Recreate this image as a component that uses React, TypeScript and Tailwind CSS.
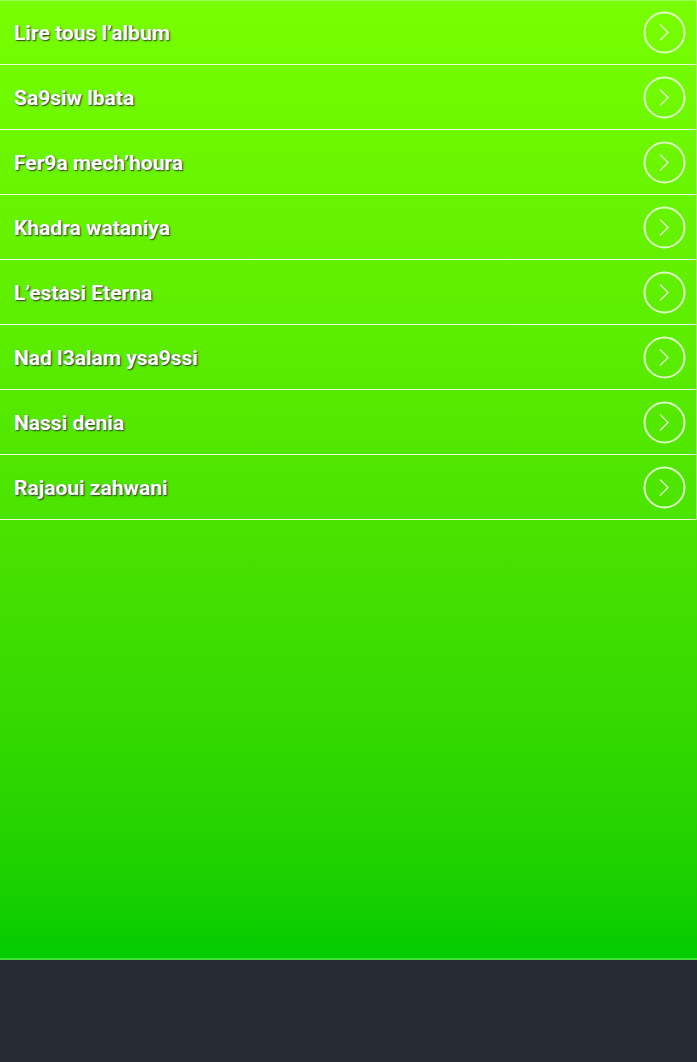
const songs = [
  'Lire tous l’album',
  'Sa9siw lbata',
  'Fer9a mech’houra',
  'Khadra wataniya',
  'L’estasi Eterna',
  'Nad l3alam ysa9ssi',
  'Nassi denia',
  'Rajaoui zahwani',
]

function Chevron() {
  return (
    <svg width="43" height="43" viewBox="0 0 43 43" fill="none" className="shrink-0">
      <circle cx="21.5" cy="21.5" r="20" stroke="#eaffd8" strokeOpacity="0.9" strokeWidth="2" />
      <path d="M17.5 14 L25 21.5 L17.5 29" stroke="#eaffd8" strokeOpacity="0.9" strokeWidth="1.6" strokeLinecap="round" strokeLinejoin="round" />
    </svg>
  )
}

export default function App() {
  return (
    <div className="w-[697px] h-[1062px] flex flex-col bg-[#272b33] font-['Roboto',sans-serif]">
      <div className="h-[960px] bg-gradient-to-b from-[#78ff00] to-[#00cc00] shadow-[inset_0_1px_0_#9aff5a] border-b-2 border-b-[#44dd33]">
        <ul className="flex flex-col border-r border-r-[#b8ff90]/70">
          {songs.map((s) => (
            <li key={s} className="h-[65px] flex items-center justify-between pl-[14px] pr-[10px] border-b border-[#e8ffd8]">
              <span className="mt-[4px] text-white text-[21px] font-bold [text-shadow:1px_1px_1.5px_#333]">
                {s}
              </span>
              <Chevron />
            </li>
          ))}
        </ul>
      </div>
      <div className="flex-1 bg-[#272b33]" />
    </div>
  )
}
